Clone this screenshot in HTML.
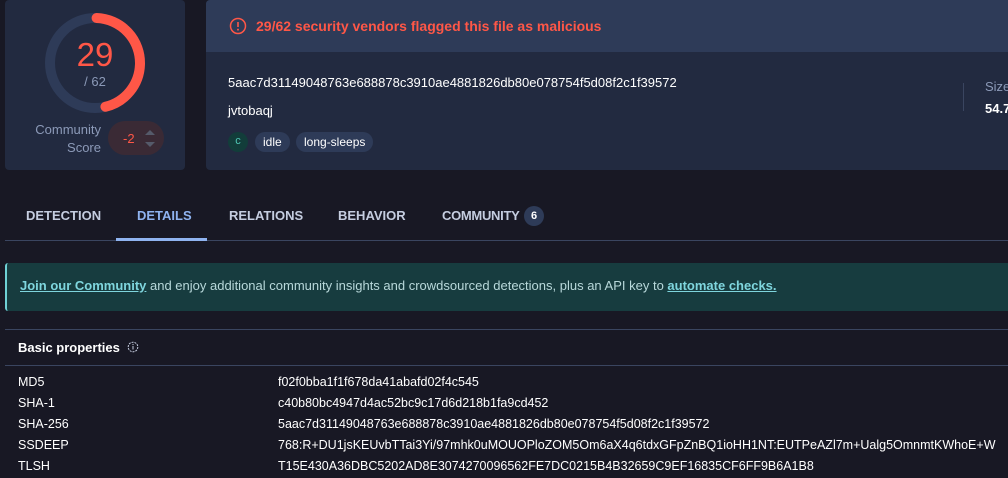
<!DOCTYPE html>
<html><head><style>
body{margin:0;width:1008px;height:478px;background:#181824;font-family:"Liberation Sans",sans-serif;overflow:hidden;position:relative;color:#fff}
.a{position:absolute}
</style></head><body>
<div class="a" style="left:5px;top:0;width:180px;height:170px;background:#222a40;border-radius:4px"></div>
<svg class="a" style="left:40px;top:8px" width="110" height="110">
<circle cx="55" cy="55" r="45" fill="none" stroke="#2e3b58" stroke-width="10"/>
<circle cx="55" cy="55" r="45" fill="none" stroke="#ff5747" stroke-width="10" stroke-linecap="round" stroke-dasharray="129 400" transform="rotate(-88 55 55)"/>
</svg>
<div class="a" style="left:40px;top:36px;width:110px;text-align:center;color:#ff5747;font-size:33px">29</div>
<div class="a" style="left:40px;top:74px;width:110px;text-align:center;color:#8c9ab8;font-size:13px">/ 62</div>
<div class="a" style="left:20px;top:121px;width:81px;text-align:right;color:#8c9ab8;font-size:13px;line-height:18px">Community<br>Score</div>
<div class="a" style="left:108px;top:121px;width:56px;height:34px;background:#3a2a35;border-radius:17px"></div>
<div class="a" style="left:123px;top:131px;color:#ff5747;font-size:13px">-2</div>
<div class="a" style="left:145px;top:130px;width:0;height:0;border:5px solid transparent;border-bottom:5px solid #555a6a;border-top:0"></div>
<div class="a" style="left:145px;top:142px;width:0;height:0;border:5px solid transparent;border-top:5px solid #555a6a;border-bottom:0"></div>

<div class="a" style="left:206px;top:0;width:802px;height:170px;background:#222a40;border-radius:4px 0 0 4px"></div>
<div class="a" style="left:206px;top:0;width:802px;height:52px;background:#2e3b58;border-radius:4px 0 0 0"></div>
<svg class="a" style="left:229px;top:17px" width="18" height="18"><circle cx="9" cy="9" r="7.5" fill="none" stroke="#ff5747" stroke-width="1.5"/><path d="M9 5v5" stroke="#ff5747" stroke-width="1.6"/><circle cx="9" cy="12.6" r="1" fill="#ff5747"/></svg>
<div class="a" style="left:256px;top:18px;color:#ff5747;font-size:14px;font-weight:bold">29/62 security vendors flagged this file as malicious</div>
<div class="a" style="left:228px;top:75px;font-size:13px">5aac7d31149048763e688878c3910ae4881826db80e078754f5d08f2c1f39572</div>
<div class="a" style="left:228px;top:103px;font-size:13px">jvtobaqj</div>
<div class="a" style="left:228px;top:132px;width:20px;height:20px;border-radius:10px;background:#123d3a;color:#4fc7b5;font-size:11px;text-align:center;line-height:19px">c</div>
<div class="a" style="left:255px;top:132px;height:20px;padding:0 8px;border-radius:10px;background:#2e3b58;font-size:12px;line-height:20px">idle</div>
<div class="a" style="left:296px;top:132px;height:20px;padding:0 8px;border-radius:10px;background:#2e3b58;font-size:12px;line-height:20px">long-sleeps</div>
<div class="a" style="left:963px;top:83px;width:1px;height:28px;background:#3a4560"></div>
<div class="a" style="left:985px;top:79px;color:#8c9ab8;font-size:13px">Size</div>
<div class="a" style="left:985px;top:101px;font-size:13px;font-weight:bold">54.7</div>

<div class="a" style="top:208px;left:26px;font-size:13px;font-weight:bold;color:#c5cde0">DETECTION</div>
<div class="a" style="top:208px;left:137px;font-size:13px;font-weight:bold;color:#8fb3f0">DETAILS</div>
<div class="a" style="top:208px;left:229px;font-size:13px;font-weight:bold;color:#c5cde0">RELATIONS</div>
<div class="a" style="top:208px;left:338px;font-size:13px;font-weight:bold;color:#c5cde0">BEHAVIOR</div>
<div class="a" style="top:208px;left:442px;font-size:13px;font-weight:bold;color:#c5cde0;letter-spacing:-0.3px">COMMUNITY</div>
<div class="a" style="top:206px;left:524px;width:20px;height:20px;border-radius:10px;background:#2e3b58;font-size:11px;font-weight:bold;text-align:center;line-height:20px">6</div>
<div class="a" style="top:240px;left:5px;width:1003px;height:1px;background:#3a4560"></div>
<div class="a" style="top:238px;left:116px;width:91px;height:3px;background:#8fb3f0"></div>

<div class="a" style="top:263px;left:5px;width:1003px;height:48px;background:#173c3f;border-left:2px solid #6fd1d6;border-radius:3px 0 0 3px;box-sizing:border-box"></div>
<div class="a" style="top:278px;left:20px;font-size:13px;color:#b8d8da"><b style="color:#7fd6de;text-decoration:underline">Join our Community</b> and enjoy additional community insights and crowdsourced detections, plus an API key to <b style="color:#7fd6de;text-decoration:underline">automate checks.</b></div>

<div class="a" style="top:329px;left:5px;width:1003px;height:1px;background:#3a4560"></div>
<div class="a" style="top:340px;left:18px;font-size:13px;font-weight:bold">Basic properties</div>
<svg class="a" style="left:127px;top:341px" width="12" height="12"><circle cx="6" cy="6" r="4.8" fill="none" stroke="#c5cde0" stroke-width="1" stroke-dasharray="2 1"/><path d="M6 5v3.5" stroke="#c5cde0"/><circle cx="6" cy="3.5" r=".6" fill="#c5cde0"/></svg>
<div class="a" style="top:365px;left:5px;width:1003px;height:1px;background:#3a4560"></div>
<div class="a" style="top:372px;left:18px;font-size:12.5px;line-height:21px">MD5<br>SHA-1<br>SHA-256<br>SSDEEP<br>TLSH</div>
<div class="a" style="top:372px;left:278px;font-size:12.5px;line-height:21px;white-space:nowrap">f02f0bba1f1f678da41abafd02f4c545<br>c40b80bc4947d4ac52bc9c17d6d218b1fa9cd452<br>5aac7d31149048763e688878c3910ae4881826db80e078754f5d08f2c1f39572<br>768:R+DU1jsKEUvbTTai3Yi/97mhk0uMOUOPloZOM5Om6aX4q6tdxGFpZnBQ1ioHH1NT:EUTPeAZl7m+Ualg5OmnmtKWhoE+W<br>T15E430A36DBC5202AD8E3074270096562FE7DC0215B4B32659C9EF16835CF6FF9B6A1B8</div>
</body></html>
